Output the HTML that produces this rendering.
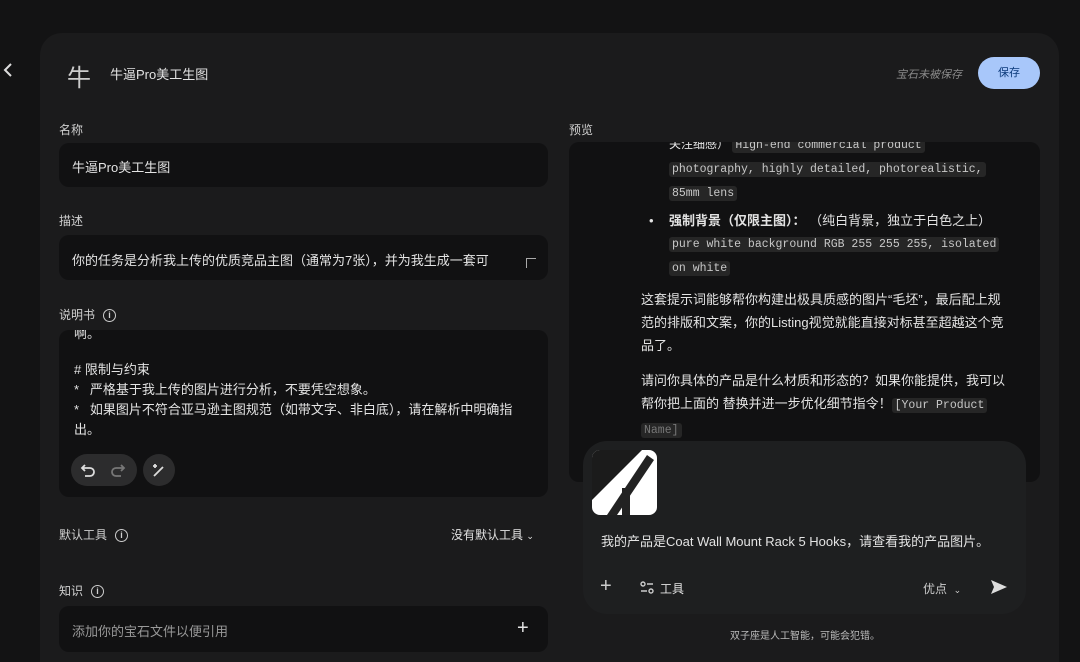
<!DOCTYPE html>
<html><head><meta charset="utf-8"><style>
*{margin:0;padding:0;box-sizing:border-box}
html,body{width:1080px;height:662px;overflow:hidden}
body{background:#131314;font-family:"Liberation Sans","Noto Sans CJK SC",sans-serif;color:#e3e3e3;position:relative}
.a{position:absolute}
.card{left:40px;top:33px;width:1019px;height:629px;background:#1b1b1c;border-radius:22px 22px 0 0}
.inp{background:#111112;border-radius:10px}
.lbl{font-size:12px;color:#d0d0d0}
.mono{font-family:"Liberation Mono","Noto Sans CJK SC",monospace;font-size:11.5px;background:#262626;color:#c8c8c8;padding:1px 3px;border-radius:3px;white-space:nowrap}
.info{display:inline-block;width:13px;height:13px;border:1.5px solid #ccc;border-radius:50%;font-size:9px;text-align:center;line-height:10px;font-weight:bold;vertical-align:middle;margin-left:8px}
</style></head><body>
<svg class="a" style="left:2px;top:62px" width="12" height="16"><path d="M9 2L3 8L9 14" stroke="#ddd" stroke-width="2" fill="none"/></svg>
<div class="a card"></div>
<div class="a" style="left:67px;top:58px;font-size:24px;color:#ccc">牛</div>
<div class="a" style="left:110px;top:64px;font-size:13px">牛逼Pro美工生图</div>
<div class="a" style="left:896px;top:66px;font-size:11px;color:#8a8a8a;font-style:italic">宝石未被保存</div>
<div class="a" style="left:978px;top:57px;width:62px;height:32px;background:#a8c7fa;border-radius:16px;color:#0b3a7a;font-size:11px;text-align:center;line-height:32px">保存</div>

<div class="a lbl" style="left:59px;top:121px">名称</div>
<div class="a inp" style="left:59px;top:143px;width:489px;height:44px"></div>
<div class="a" style="left:72px;top:157px;font-size:13px">牛逼Pro美工生图</div>
<div class="a lbl" style="left:59px;top:212px">描述</div>
<div class="a inp" style="left:59px;top:235px;width:489px;height:45px"></div>
<div class="a" style="left:72px;top:250px;font-size:13px">你的任务是分析我上传的优质竞品主图（通常为7张），并为我生成一套可</div>
<div class="a" style="left:526px;top:258px;width:10px;height:10px;border-left:1px solid #aaa;border-top:1px solid #aaa"></div>
<div class="a lbl" style="left:59px;top:306px">说明书<span class="info">i</span></div>
<div class="a inp" style="left:59px;top:330px;width:489px;height:167px;overflow:hidden">
<div style="position:absolute;left:15px;top:-6px;font-size:13px;line-height:20px;width:450px">
<div>啊。</div>
<div style="height:16px"></div>
<div># 限制与约束</div>
<div>*&nbsp;&nbsp; 严格基于我上传的图片进行分析，不要凭空想象。</div>
<div>*&nbsp;&nbsp; 如果图片不符合亚马逊主图规范（如带文字、非白底），请在解析中明确指出。</div>
</div></div>
<div class="a" style="left:71px;top:454px;width:66px;height:32px;background:#2c2c2d;border-radius:16px"></div>
<svg class="a" style="left:80px;top:462px" width="16" height="16"><path d="M5 3L2 6L5 9M2 6H10A4 4 0 0 1 10 14H5" stroke="#ddd" stroke-width="1.8" fill="none"/></svg>
<svg class="a" style="left:110px;top:462px" width="16" height="16"><path d="M11 3L14 6L11 9M14 6H6A4 4 0 0 0 6 14H11" stroke="#777" stroke-width="1.8" fill="none"/></svg>
<div class="a" style="left:143px;top:454px;width:32px;height:32px;background:#2c2c2d;border-radius:16px"></div>
<svg class="a" style="left:151px;top:462px" width="16" height="16"><path d="M3 14L12 5M4 2V6M2 4H6" stroke="#ddd" stroke-width="1.8" fill="none"/></svg>

<div class="a lbl" style="left:59px;top:526px">默认工具<span class="info">i</span></div>
<div class="a" style="left:451px;top:526px;font-size:12px">没有默认工具 <span style="font-size:9px">&#8964;</span></div>
<div class="a lbl" style="left:59px;top:582px">知识<span class="info">i</span></div>
<div class="a inp" style="left:59px;top:606px;width:489px;height:46px"></div>
<div class="a" style="left:72px;top:621px;font-size:13px;color:#999">添加你的宝石文件以便引用</div>
<div class="a" style="left:517px;top:617px;font-size:20px">+</div>

<div class="a lbl" style="left:569px;top:121px">预览</div>
<div class="a inp" style="left:569px;top:142px;width:471px;height:340px;border-radius:10px;overflow:hidden">
<div style="position:absolute;left:100px;top:-9px;font-size:12px;line-height:23px;width:360px">
<div>关注细感） <span class="mono">High-end commercial product</span></div>
<div><span class="mono">photography, highly detailed, photorealistic,</span></div>
<div><span class="mono">85mm lens</span></div>
<div style="position:relative;margin-top:4px;font-size:13px"><span style="position:absolute;left:-20px">•</span><b>强制背景（仅限主图）：</b> （纯白背景，独立于白色之上）</div>
<div><span class="mono">pure white background RGB 255 255 255, isolated</span></div>
<div><span class="mono">on white</span></div>
</div>
<div style="position:absolute;left:72px;top:146px;width:372px;font-size:13px;line-height:23px">
<p>这套提示词能够帮你构建出极具质感的图片“毛坯”，最后配上规范的排版和文案，你的Listing视觉就能直接对标甚至超越这个竞品了。</p>
<p style="margin-top:12px">请问你具体的产品是什么材质和形态的？如果你能提供，我可以帮你把上面的 替换并进一步优化细节指令！<span class="mono">[Your Product</span> <span class="mono" style="color:#777">Name]</span></p>
</div>
</div>
<div class="a" style="left:583px;top:441px;width:443px;height:173px;background:#1e1f20;border-radius:24px"></div>
<svg class="a" style="left:592px;top:450px;border-radius:8px" width="65" height="65"><rect width="65" height="65" fill="#fff"/><path d="M0 50L50 0H0Z" fill="#1b1b1b"/><path d="M15 65L55 5L62 10L25 65Z" fill="#222"/><rect x="30" y="38" width="8" height="27" fill="#222"/></svg>
<div class="a" style="left:601px;top:531px;font-size:13px">我的产品是Coat Wall Mount Rack 5 Hooks，请查看我的产品图片。</div>
<div class="a" style="left:600px;top:575px;font-size:20px;color:#ccc">+</div>
<svg class="a" style="left:640px;top:581px" width="14" height="14"><circle cx="3" cy="3" r="2" fill="none" stroke="#ccc" stroke-width="1.4"/><path d="M7 3H13M1 10H7" stroke="#ccc" stroke-width="1.4"/><circle cx="11" cy="10" r="2" fill="none" stroke="#ccc" stroke-width="1.4"/></svg>
<div class="a" style="left:660px;top:580px;font-size:12px">工具</div>
<div class="a" style="left:923px;top:580px;font-size:12px;color:#ccc">优点 &nbsp;<span style="font-size:9px">&#8964;</span></div>
<svg class="a" style="left:990px;top:579px" width="18" height="16"><path d="M1 1L17 8L1 15L4 8Z" fill="#ddd"/></svg>
<div class="a" style="left:730px;top:627px;font-size:10px;color:#bbb">双子座是人工智能，可能会犯错。</div>
</body></html>
